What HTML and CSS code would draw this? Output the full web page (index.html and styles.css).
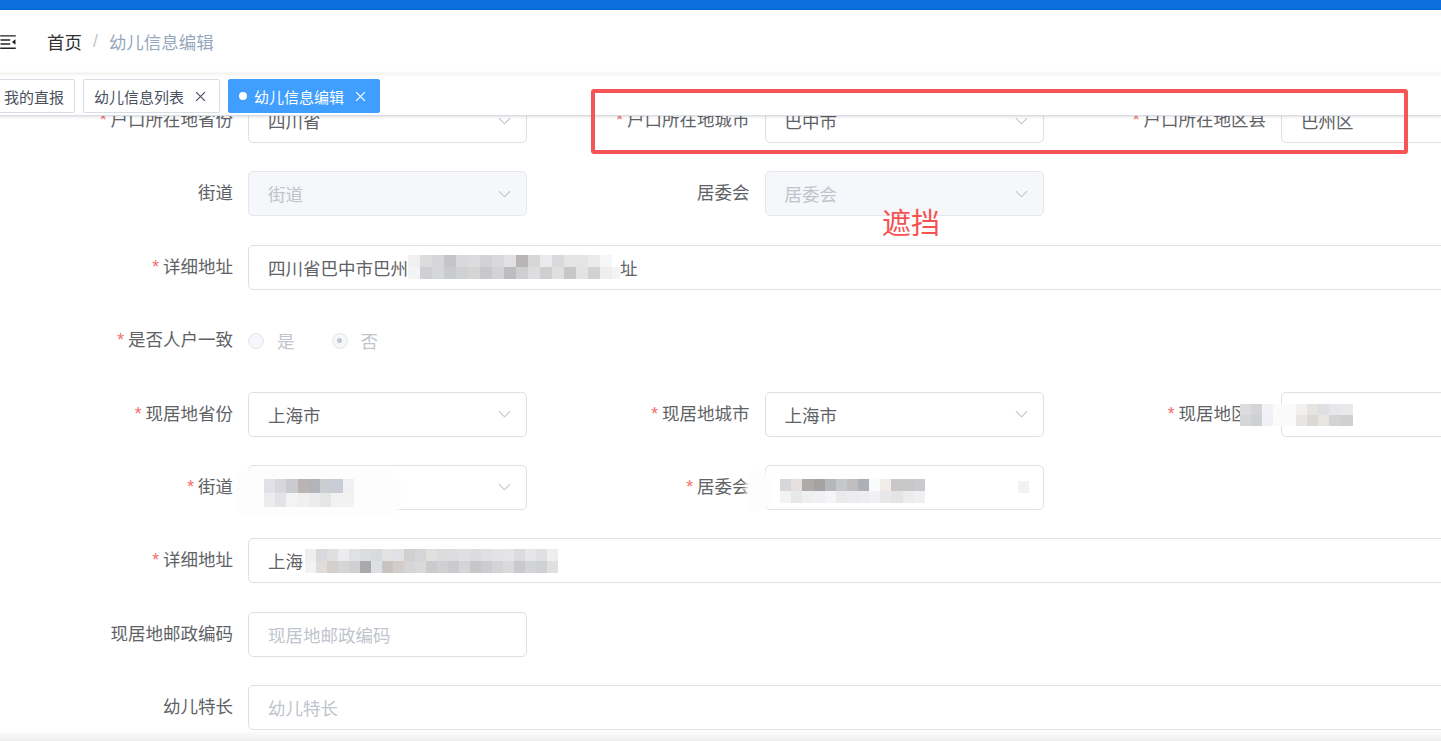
FILE: index.html
```html
<!DOCTYPE html>
<html lang="zh-CN">
<head>
    <meta charset="UTF-8">
    <meta name="viewport" content="width=device-width, initial-scale=1.0">
    <title>幼儿信息编辑</title>
    <link rel="stylesheet" href="styles.css">
</head>
<body>
<div class="main-container">
    <div class="fixed-header">
        <div class="top-bar"></div>
        <div class="navbar">
            <div class="hamburger-container">
                <svg class="hamburger is-active" viewBox="0 0 1024 1024">
                    <path d="M408 442h480c4.4 0 8-3.6 8-8v-56c0-4.4-3.6-8-8-8H408c-4.4 0-8 3.6-8 8v56c0 4.4 3.6 8 8 8zm-8 204c0 4.4 3.6 8 8 8h480c4.4 0 8-3.6 8-8v-56c0-4.4-3.6-8-8-8H408c-4.4 0-8 3.6-8 8v56zm504-486H120c-4.4 0-8 3.6-8 8v56c0 4.4 3.6 8 8 8h784c4.4 0 8-3.6 8-8v-56c0-4.4-3.6-8-8-8zm0 632H120c-4.4 0-8 3.6-8 8v56c0 4.4 3.6 8 8 8h784c4.4 0 8-3.6 8-8v-56c0-4.4-3.6-8-8-8zM142.4 642.1L298.7 519a8.840 8.840 0 0 0 0-13.9L142.4 381.9c-5.8-4.6-14.4-.5-14.4 6.9v246.3a8.900 8.900 0 0 0 14.4 7z"/>
                </svg>
            </div>
            <div class="breadcrumb">
                <span class="crumb-link">首页</span>
                <span class="crumb-sep">/</span>
                <span class="crumb-current">幼儿信息编辑</span>
            </div>
        </div>
        <div class="tags-view">
            <span class="tag">我的直报</span>
            <span class="tag">幼儿信息列表<svg class="tag-close" viewBox="0 0 10 10"><path d="M1 1L9 9M9 1L1 9"/></svg></span>
            <span class="tag active">幼儿信息编辑<svg class="tag-close" viewBox="0 0 10 10"><path d="M1 1L9 9M9 1L1 9"/></svg></span>
        </div>
    </div>

    <div class="app-main">
        <div class="info-form">
            <!-- 户籍地址 -->
            <div class="form-row">
                <div class="form-item">
                    <label class="form-label required">户口所在地省份</label>
                    <div class="form-content">
                        <div class="el-input select">四川省<svg class="arrow" viewBox="0 0 14 8"><path d="M1 1l6 6 6-6"/></svg></div>
                    </div>
                </div>
                <div class="form-item">
                    <label class="form-label required">户口所在地城市</label>
                    <div class="form-content">
                        <div class="el-input select">巴中市<svg class="arrow" viewBox="0 0 14 8"><path d="M1 1l6 6 6-6"/></svg></div>
                    </div>
                </div>
                <div class="form-item">
                    <label class="form-label required">户口所在地区县</label>
                    <div class="form-content">
                        <div class="el-input select">巴州区<svg class="arrow" viewBox="0 0 14 8"><path d="M1 1l6 6 6-6"/></svg></div>
                    </div>
                </div>
            </div>

            <div class="form-row">
                <div class="form-item">
                    <label class="form-label">街道</label>
                    <div class="form-content">
                        <div class="el-input select is-disabled">街道<svg class="arrow" viewBox="0 0 14 8"><path d="M1 1l6 6 6-6"/></svg></div>
                    </div>
                </div>
                <div class="form-item">
                    <label class="form-label">居委会</label>
                    <div class="form-content">
                        <div class="el-input select is-disabled">居委会<svg class="arrow" viewBox="0 0 14 8"><path d="M1 1l6 6 6-6"/></svg></div>
                    </div>
                </div>
            </div>

            <div class="form-row">
                <div class="form-item wide">
                    <label class="form-label required">详细地址</label>
                    <div class="form-content">
                        <div class="el-input">四川省巴中市巴州<span class="mosaic mosaic-hk"></span>址</div>
                    </div>
                </div>
            </div>

            <div class="form-row">
                <div class="form-item">
                    <label class="form-label required">是否人户一致</label>
                    <div class="form-content radio-group">
                        <span class="radio"><span class="radio-inner"></span><span class="radio-label">是</span></span>
                        <span class="radio checked"><span class="radio-inner"></span><span class="radio-label">否</span></span>
                    </div>
                </div>
            </div>

            <!-- 现居地址 -->
            <div class="form-row">
                <div class="form-item">
                    <label class="form-label required">现居地省份</label>
                    <div class="form-content">
                        <div class="el-input select">上海市<svg class="arrow" viewBox="0 0 14 8"><path d="M1 1l6 6 6-6"/></svg></div>
                    </div>
                </div>
                <div class="form-item">
                    <label class="form-label required">现居地城市</label>
                    <div class="form-content">
                        <div class="el-input select">上海市<svg class="arrow" viewBox="0 0 14 8"><path d="M1 1l6 6 6-6"/></svg></div>
                    </div>
                </div>
                <div class="form-item">
                    <label class="form-label required">现居地区县</label>
                    <div class="form-content">
                        <div class="el-input select">&nbsp;<svg class="arrow" viewBox="0 0 14 8"><path d="M1 1l6 6 6-6"/></svg></div>
                    </div>
                    <span class="mosaic mosaic-qx"></span>
                </div>
            </div>

            <div class="form-row">
                <div class="form-item">
                    <label class="form-label required">街道</label>
                    <div class="form-content">
                        <div class="el-input select">&nbsp;<svg class="arrow" viewBox="0 0 14 8"><path d="M1 1l6 6 6-6"/></svg></div>
                    </div>
                    <span class="smudge smudge-jd"><span class="mosaic mosaic-jd"></span></span>
                </div>
                <div class="form-item">
                    <label class="form-label required">居委会</label>
                    <div class="form-content">
                        <div class="el-input select">&nbsp;</div>
                    </div>
                    <span class="smudge smudge-jwh"></span>
                    <span class="mosaic mosaic-jwh"></span>
                    <span class="mosaic mosaic-dot"></span>
                </div>
            </div>

            <div class="form-row">
                <div class="form-item wide">
                    <label class="form-label required">详细地址</label>
                    <div class="form-content">
                        <div class="el-input">上海<span class="mosaic mosaic-xj"></span></div>
                    </div>
                </div>
            </div>

            <div class="form-row">
                <div class="form-item">
                    <label class="form-label">现居地邮政编码</label>
                    <div class="form-content">
                        <div class="el-input placeholder">现居地邮政编码</div>
                    </div>
                </div>
            </div>

            <div class="form-row">
                <div class="form-item wide">
                    <label class="form-label">幼儿特长</label>
                    <div class="form-content">
                        <div class="el-input placeholder">幼儿特长</div>
                    </div>
                </div>
            </div>
        </div>
    </div>
</div>

<div class="mark-box"></div>
<div class="mark-text">遮挡</div>
<div class="bottom-shade"></div>
</body>
</html>
```

FILE: styles.css
```css
body {
    margin: 0;
    padding: 0;
    overflow: hidden;
    background-color: #fff;
    font-family: "Liberation Sans", "Noto Sans CJK SC", sans-serif;
    color: #606266;
}
.main-container {
    margin-left: -25px;
}

/* header */
.fixed-header {
    position: fixed;
    top: 0;
    left: -25px;
    right: 0;
    z-index: 9;
    background-color: #fff;
}
.top-bar {
    height: 10px;
    background-color: #0a6fdb;
}
.navbar {
    height: 63px;
    display: flex;
    align-items: center;
    box-shadow: 0 1px 4px rgba(0, 21, 41, 0.08);
}
.hamburger-container {
    display: flex;
    align-items: center;
    padding: 0 19px 0 23px;
    height: 100%;
}
.hamburger {
    width: 20px;
    height: 20px;
    fill: #222;
}
.hamburger.is-active {
    transform: rotate(180deg);
}
.breadcrumb {
    margin-left: 10px;
    font-size: 17.5px;
    display: flex;
    align-items: center;
}
.crumb-link {
    color: #303133;
}
.crumb-sep {
    margin: 0 11px;
    color: #c0c4cc;
}
.crumb-current {
    color: #97a8be;
}
.tags-view {
    height: 42px;
    border-bottom: 1px solid #d8dce5;
    box-shadow: 0 1px 3px 0 rgba(0, 0, 0, 0.12), 0 0 3px 0 rgba(0, 0, 0, 0.04);
    display: flex;
    align-items: flex-start;
    white-space: nowrap;
}
.tag {
    display: inline-flex;
    align-items: center;
    height: 32px;
    margin-top: 6px;
    margin-left: 8px;
    padding: 0 9px 0 10px;
    border: 1px solid #d8dce5;
    border-radius: 2px;
    color: #495060;
    background-color: #fff;
    font-size: 15px;
}
.tag:first-child {
    margin-left: 18px;
    padding-right: 10px;
}
.tag.active {
    background-color: #409eff;
    border-color: #409eff;
    color: #fff;
}
.tag.active::before {
    content: "";
    width: 8px;
    height: 8px;
    border-radius: 50%;
    background-color: #fff;
    margin-right: 7px;
}
.tag-close {
    width: 11px;
    height: 11px;
    margin: 0 4px 0 11px;
    stroke: currentColor;
    stroke-width: 1.1;
    fill: none;
}

/* form */
.app-main {
    padding-top: 98px;
}
.info-form {
    width: 1800px;
    padding-left: 123px;
}
.form-row {
    display: flex;
    height: 45px;
    margin-bottom: 28.4px;
}
.form-item {
    position: relative;
    display: flex;
    width: 516.5px;
    flex-shrink: 0;
}
.form-item.wide {
    width: 1549.5px;
}
.form-label {
    width: 150px;
    flex-shrink: 0;
    box-sizing: border-box;
    padding-right: 15px;
    text-align: right;
    line-height: 45px;
    font-size: 17.5px;
    color: #606266;
    white-space: nowrap;
}
.form-label.required::before {
    content: "*";
    color: #f56c6c;
    margin-right: 4px;
}
.form-content {
    width: 279px;
}
.form-item.wide .form-content {
    flex: 1;
}
.el-input {
    height: 45px;
    box-sizing: border-box;
    display: flex;
    align-items: center;
    padding: 0 19px;
    border: 1px solid #dcdfe6;
    border-radius: 5px;
    background-color: #fff;
    font-size: 17.5px;
    color: #606266;
    white-space: nowrap;
}
.el-input.select {
    padding-right: 15px;
}
.el-input.placeholder {
    color: #c0c4cc;
}
.el-input.is-disabled {
    background-color: #f5f7fa;
    border-color: #e4e7ed;
    color: #c0c4cc;
}
.arrow {
    margin-left: auto;
    width: 13px;
    height: 8px;
    fill: none;
    stroke: #c0c4cc;
    stroke-width: 1.2;
}

/* radios */
.radio-group {
    display: flex;
    align-items: center;
}
.radio {
    display: inline-flex;
    align-items: center;
    margin-right: 37px;
}
.radio-inner {
    width: 16px;
    height: 16px;
    box-sizing: border-box;
    border: 1px solid #e4e7ed;
    border-radius: 50%;
    background-color: #f5f7fa;
    display: flex;
    align-items: center;
    justify-content: center;
}
.radio.checked .radio-inner::after {
    content: "";
    width: 5px;
    height: 5px;
    border-radius: 50%;
    background-color: #c0c4cc;
}
.radio-label {
    margin-left: 13px;
    font-size: 17.5px;
    color: #c0c4cc;
}

/* privacy mosaics */
.mosaic {
    display: inline-block;
    flex-shrink: 0;
}
.smudge {
    position: absolute;
    background-color: #fdfdfd;
    border-radius: 12px;
    box-shadow: 0 0 4px 3px #fdfdfd;
}
.mosaic-hk {
    width: 212px;
    height: 24px;
    background:
        linear-gradient(to right, #f0f0f1 0 12px, #dcdcde 12px 24px, #d6d6d9 24px 36px, #c5c4c6 36px 48px, #d9d9dc 48px 60px, #dcdcdf 60px 72px, #d2d2d5 72px 84px, #d9d9db 84px 96px, #e1e1e3 96px 108px, #b9b5b5 108px 120px, #d9d7d5 120px 132px, #e9eaec 132px 144px, #dadadc 144px 156px, #e6e4e2 156px 168px, #e4e4e4 168px 180px, #ebebeb 180px 192px, #f6f6f6 192px 204px, #fff 204px) top / 100% 50% no-repeat,
        linear-gradient(to right, #f4f4f5 0 12px, #cfd0d4 12px 24px, #d6d7db 24px 36px, #c8cbcf 36px 48px, #d1d1d3 48px 60px, #d6d5d4 60px 72px, #c8c8cb 72px 84px, #d3d3d5 84px 96px, #bdbdc0 96px 108px, #cfcfd2 108px 120px, #dddddf 120px 132px, #cfcfd2 132px 144px, #e0dfdf 144px 156px, #c7c7c9 156px 168px, #e3e3e3 168px 180px, #d2d2d4 180px 192px, #eeeeee 192px 204px, #f4f4f4 204px) bottom / 100% 50% no-repeat;
}
.mosaic-xj {
    width: 253px;
    height: 24px;
    margin-left: 2px;
    background:
        linear-gradient(to right, #eeeeef 0 11px, #d9d9dd 11px 22px, #e0dedf 22px 33px, #ebecee 33px 44px, #e0e1e3 44px 55px, #dcdde0 55px 66px, #d9dadc 66px 77px, #e3e3e3 77px 88px, #e0e2e5 88px 99px, #d2cfd1 99px 110px, #d5d4d6 110px 121px, #e2dfdf 121px 132px, #dcdcde 132px 143px, #dddde0 143px 154px, #e0e0e3 154px 165px, #dcdcdf 165px 176px, #e0e0e2 176px 187px, #e3e3e5 187px 198px, #e4e4e6 198px 209px, #dcdcde 209px 220px, #e6e6e8 220px 231px, #e0e0e2 231px 242px, #eeeeef 242px) top / 100% 50% no-repeat,
        linear-gradient(to right, #f2f2f2 0 11px, #e0ddd9 11px 22px, #d2cfcd 22px 33px, #d6d4d4 33px 44px, #d0d0d2 44px 55px, #a9a9ab 55px 66px, #dde0e3 66px 77px, #c9c4c4 77px 88px, #d4ccc9 88px 99px, #d5d5d8 99px 110px, #dad8d8 110px 121px, #cacbce 121px 132px, #d0d0d3 132px 143px, #c9cbce 143px 154px, #d5d5d8 154px 165px, #c7c7ca 165px 176px, #ccccd0 176px 187px, #d4d4d7 187px 198px, #dadadc 198px 209px, #c9cacd 209px 220px, #d4d4d6 220px 231px, #cfd2d4 231px 242px, #e0e0e0 242px) bottom / 100% 50% no-repeat;
}
.mosaic-qx {
    position: absolute;
    left: 109px;
    top: 12px;
    width: 113px;
    height: 22px;
    background:
        linear-gradient(to right, #dcdcde 0 11px, #d4d4d7 11px 22px, #f1f2f5 22px 33px, #fafafa 33px 56px, #f2f1ef 56px 67px, #e6e4e1 67px 78px, #dfe0e3 78px 89px, #e6e7ea 89px 100px, #e9e9eb 100px) top / 100% 50% no-repeat,
        linear-gradient(to right, #d5d6d8 0 11px, #cfd0d2 11px 22px, #f0f1f4 22px 33px, #fafafa 33px 56px, #e8e6e2 56px 67px, #dcd9d5 67px 78px, #e9e6e2 78px 89px, #d4d4d6 89px 100px, #d0d0d2 100px) bottom / 100% 50% no-repeat;
}
.smudge-jd {
    left: 140px;
    top: 7px;
    width: 160px;
    height: 42px;
    display: flex;
    align-items: center;
}
.mosaic-jd {
    margin-left: 26px;
    width: 90px;
    height: 28px;
    background:
        linear-gradient(to right, #e0e0e6 0 11px, #d6d8de 11px 22px, #c9cbd1 22px 34px, #bcb4b2 34px 45px, #b2b4ba 45px 56px, #cbcdd1 56px 67px, #c8ccd4 67px 79px, #f0f0f2 79px) top / 100% 50% no-repeat,
        linear-gradient(to right, #ececee 0 11px, #e2e3e6 11px 22px, #f2f3f3 22px 34px, #f0f0f0 34px 45px, #ececed 45px 56px, #e5e6e8 56px 67px, #f2f2f2 67px) bottom / 100% 50% no-repeat;
}
.smudge-jwh {
    left: 134px;
    top: 8px;
    width: 18px;
    height: 36px;
}
.mosaic-jwh {
    position: absolute;
    left: 165px;
    top: 14px;
    width: 145px;
    height: 24px;
    background:
        linear-gradient(to right, #d8d6d8 0 11px, #e6dfdf 11px 22px, #aeaaa9 22px 34px, #a6a2a1 34px 45px, #b5b7bd 45px 56px, #c5c7ca 56px 67px, #c0bebe 67px 78px, #aeb0b9 78px 89px, #fafcfb 89px 100px, #f2ece9 100px 111px, #c9c7c7 111px 123px, #c8c8ca 123px 134px, #c8cacd 134px) top / 100% 50% no-repeat,
        linear-gradient(to right, #f4f3f3 0 11px, #e9e8e9 11px 22px, #efefef 22px 34px, #f1f1f3 34px 45px, #f5f5f7 45px 56px, #ebeaeb 56px 67px, #ececee 67px 78px, #eeeef0 78px 89px, #f1f1f3 89px 100px, #e7e7e9 100px 111px, #e5e4e3 111px 123px, #ececee 123px 134px, #f0f0f2 134px) bottom / 100% 50% no-repeat;
}
.mosaic-dot {
    position: absolute;
    left: 403px;
    top: 16px;
    width: 11px;
    height: 12px;
    background-color: #f2f2f2;
}

/* red annotation drawn over the page */
.mark-box {
    position: absolute;
    left: 591px;
    top: 89px;
    width: 817px;
    height: 65px;
    box-sizing: border-box;
    border: 4px solid #f65555;
    border-radius: 3px;
    z-index: 10;
}
.mark-text {
    position: absolute;
    left: 882px;
    top: 207px;
    font-size: 29px;
    line-height: 1;
    color: #f65252;
    font-family: "Noto Sans CJK SC", sans-serif;
    z-index: 10;
}
.bottom-shade {
    position: fixed;
    left: 0;
    right: 0;
    bottom: 0;
    height: 9px;
    background: linear-gradient(#fbfbfb, #efefef);
    z-index: 9;
}
```
